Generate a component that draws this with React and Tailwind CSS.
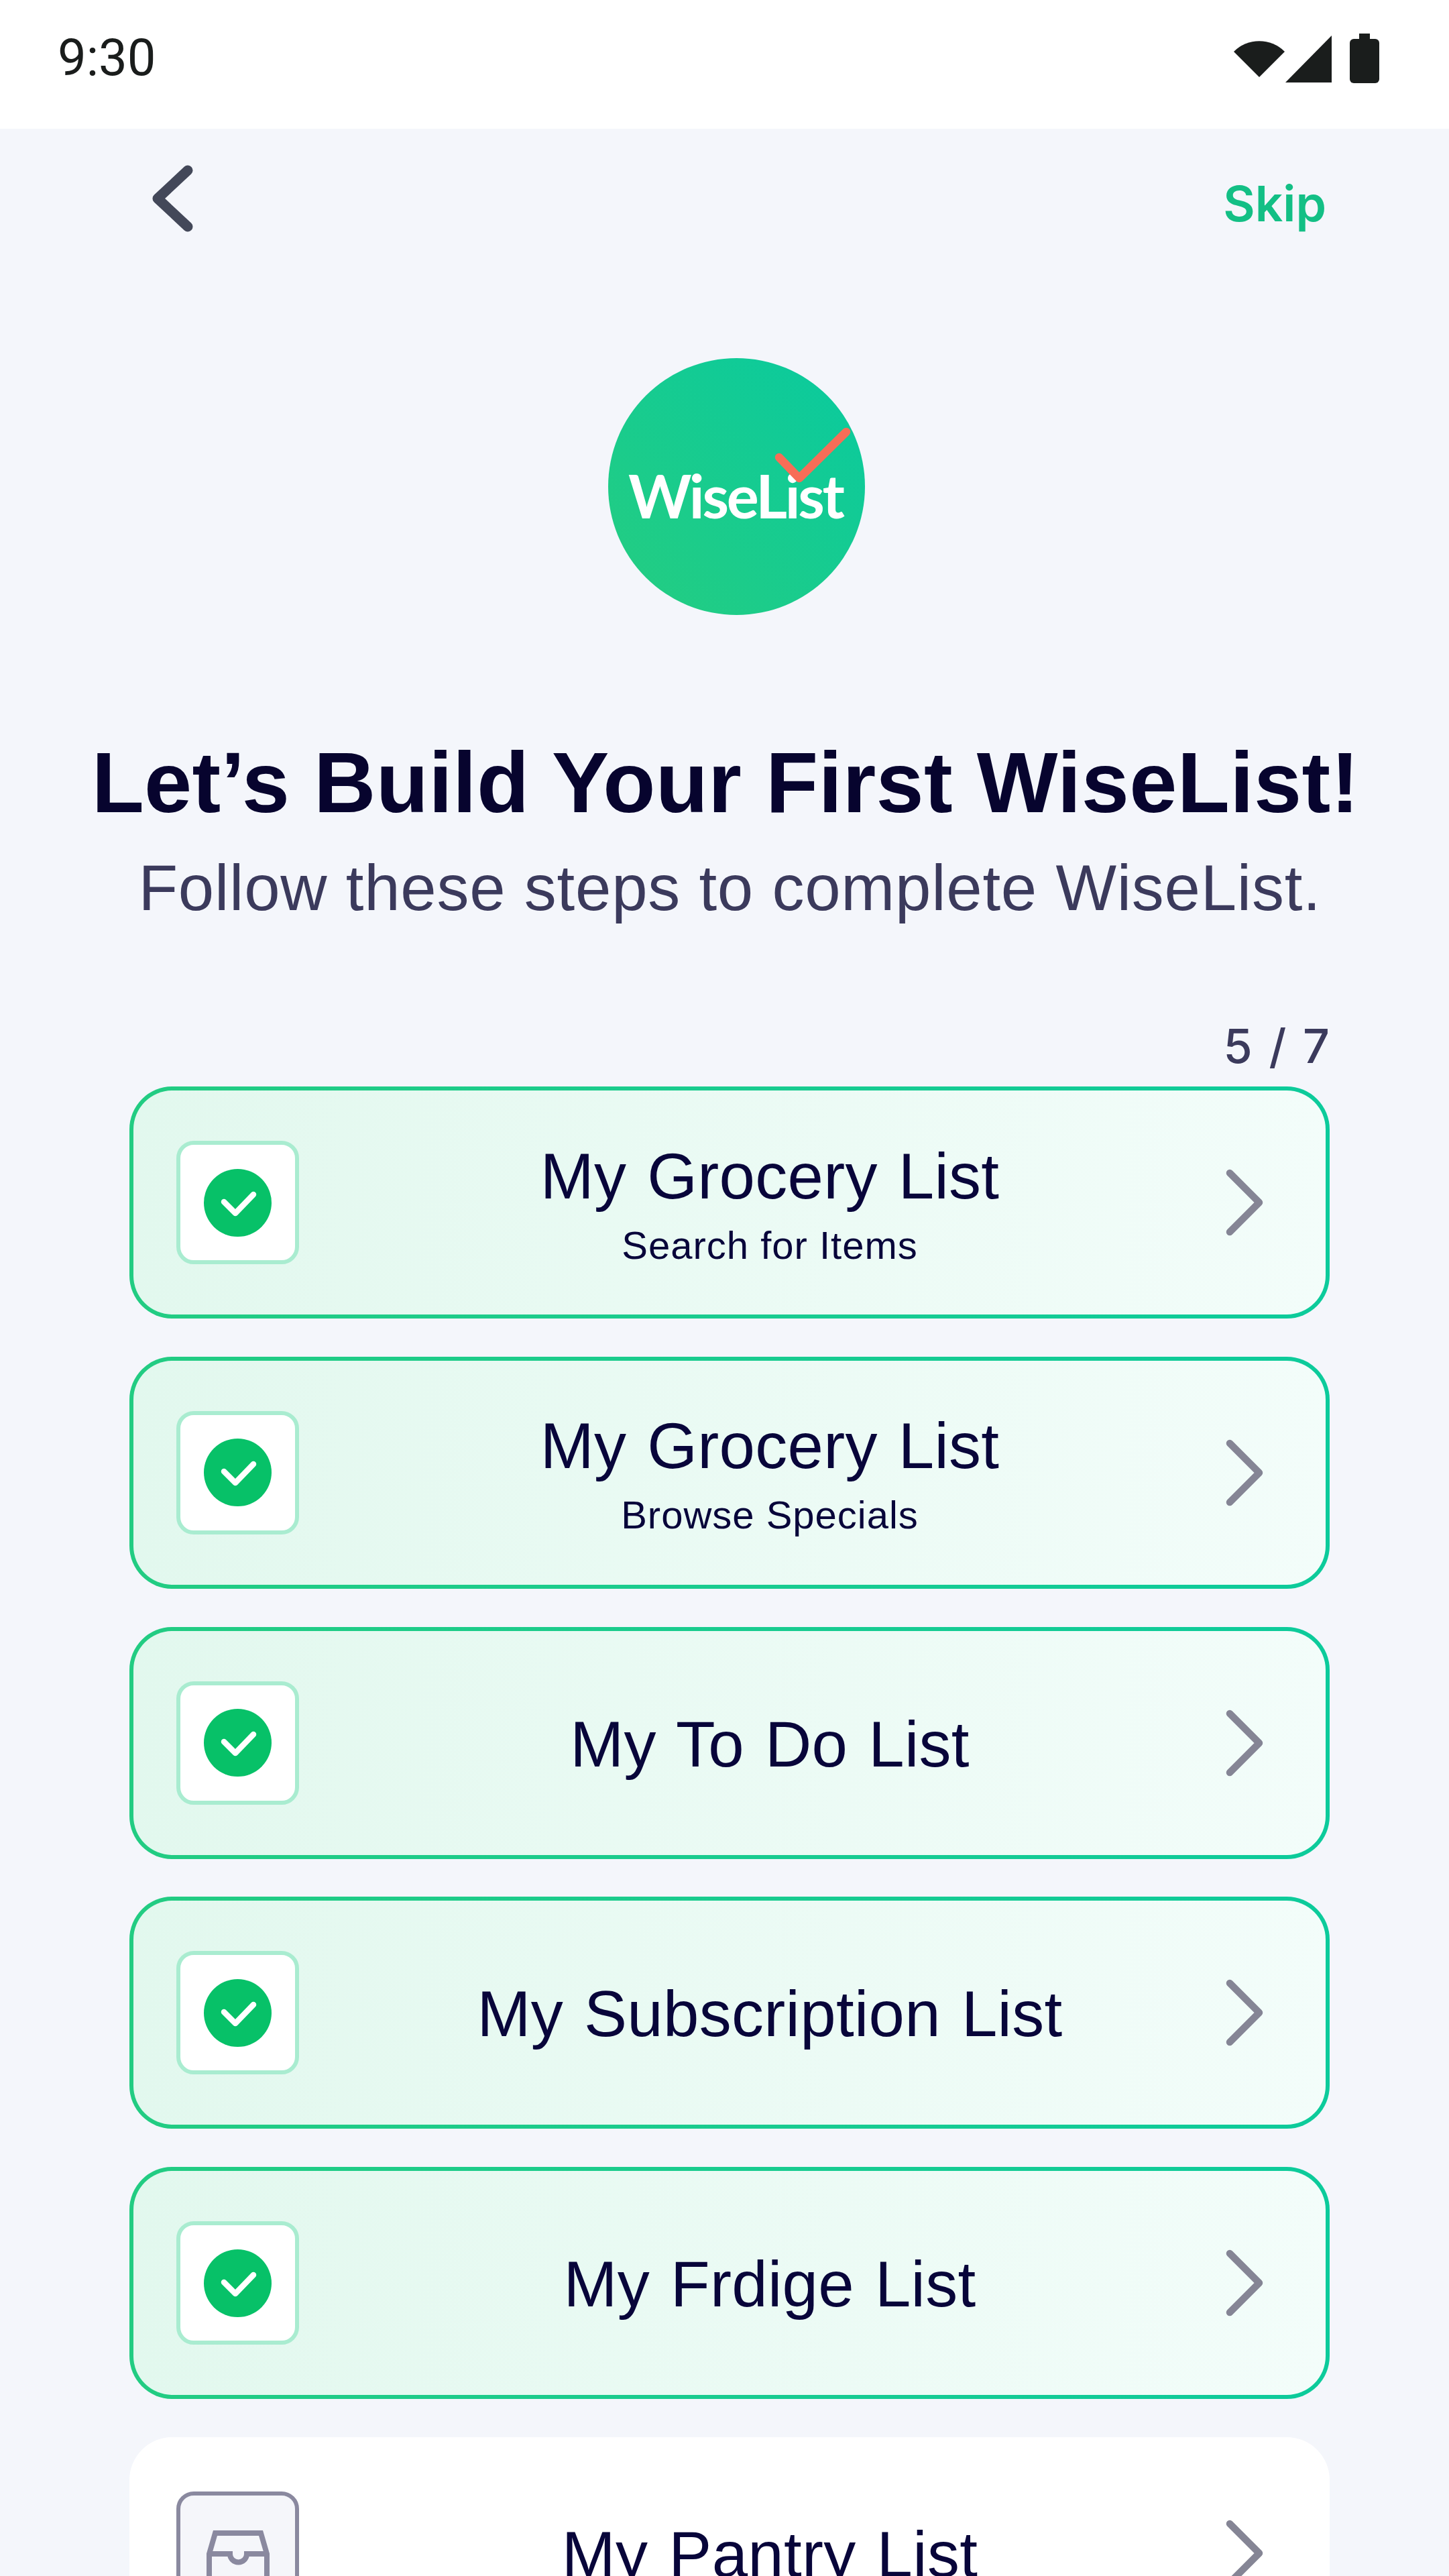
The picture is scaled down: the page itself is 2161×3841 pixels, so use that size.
import React from "react"

const sans = "font-['Liberation_Sans',Arial,sans-serif]"

const lists = [
  { title: "My Grocery List", sub: "Search for Items" },
  { title: "My Grocery List", sub: "Browse Specials" },
  { title: "My To Do List" },
  { title: "My Subscription List" },
  { title: "My Frdige List" },
]

function StatusIcons() {
  return (
    <svg width="218" height="75" viewBox="0 0 218 75" fill="#1a1d1c">
      <path d="M0 27A53.7 53.7 0 0 1 76 27L38 65Z" />
      <path d="M77 73L146 3V73Z" />
      <rect x="173" y="8" width="44" height="66" rx="6" />
      <rect x="187" y="0" width="16" height="9" />
    </svg>
  )
}

function Logo() {
  return (
    <svg width="383" height="383" viewBox="0 0 383 383">
      <defs>
        <linearGradient id="logoFill" x1="0" y1="1" x2="1" y2="0">
          <stop offset="0" stopColor="#25cd80" />
          <stop offset="1" stopColor="#09ca9f" />
        </linearGradient>
      </defs>
      <circle cx="191.5" cy="191.5" r="191.5" fill="url(#logoFill)" />
      <text
        x="30"
        y="239"
        fill="#fff"
        fontFamily="Lato, sans-serif"
        fontSize="90"
        fontWeight="700"
        textLength="323"
        lengthAdjust="spacing"
      >
        WiseList
      </text>
      <path
        d="M255 148L285 179L355 110"
        fill="none"
        stroke="#f76d57"
        strokeWidth="12.5"
        strokeLinecap="round"
        strokeLinejoin="round"
      />
    </svg>
  )
}

function Chevron() {
  return (
    <svg width="60" height="108" viewBox="0 0 60 108" fill="none" className="shrink-0">
      <path
        d="M8 10L52 54L8 98"
        stroke="#858595"
        strokeWidth="10.5"
        strokeLinecap="round"
        strokeLinejoin="round"
      />
    </svg>
  )
}

function RowLabel({ title, sub }) {
  return (
    <div className="flex-1 pl-[24px] pt-[4px] text-center text-[#08053a]">
      <div className="text-[96px] leading-[104px] tracking-[0.3px] [word-spacing:4px]">{title}</div>
      {sub && <div className="mt-[19px] text-[58px] leading-[64px] tracking-[1px]">{sub}</div>}
    </div>
  )
}

function DoneCard({ title, sub }) {
  return (
    <div className="h-[346px] rounded-[64px] bg-gradient-to-r from-[#22cc82] to-[#0ccb9b] p-[6px]">
      <div className="flex h-full items-center rounded-[58px] bg-gradient-to-r from-[#e2f8ee] to-[#f3fdfa] pl-[64px] pr-[91px]">
        <div className="flex h-[184px] w-[183px] shrink-0 items-center justify-center rounded-[26px] border-[6px] border-[#a9ecd0] bg-white">
          <svg width="101" height="101" viewBox="0 0 101 101">
            <circle cx="50.5" cy="50.5" r="50.5" fill="#07c168" />
            <path
              d="M30 49L47 66L74 38"
              fill="none"
              stroke="#fff"
              strokeWidth="8.5"
              strokeLinecap="round"
              strokeLinejoin="round"
            />
          </svg>
        </div>
        <RowLabel title={title} sub={sub} />
        <Chevron />
      </div>
    </div>
  )
}

function TodoCard({ title }) {
  return (
    <div className="flex h-[346px] items-center rounded-[64px] bg-white pl-[70px] pr-[97px]">
      <div className="flex h-[184px] w-[183px] shrink-0 justify-center overflow-hidden rounded-[26px] border-[6px] border-[#8a899f] bg-[#f5f6fa] pt-[45px]">
        <svg width="110" height="130" viewBox="0 0 110 130" fill="none" className="shrink-0">
          <path
            d="M12 130V42L21 11H89L98 42V130M12 42H43A12.5 12.5 0 0 0 68 42H98"
            stroke="#8a899f"
            strokeWidth="8"
          />
        </svg>
      </div>
      <RowLabel title={title} />
      <Chevron />
    </div>
  )
}

export default function App() {
  return (
    <div className={`h-[3841px] overflow-hidden bg-[#f4f6fb] ${sans}`}>
      {/* Status bar */}
      <div className="flex h-[192px] items-start justify-between bg-white pl-[86px] pr-[103px]">
        <span className="mt-[44px] font-['Roboto',sans-serif] text-[76px] leading-[84px] text-[#1a1d1c]">9:30</span>
        <div className="mt-[50px]">
          <StatusIcons />
        </div>
      </div>

      {/* Top actions */}
      <div className="flex items-start justify-between pl-[220px] pr-[183px] pt-[50px]">
        <svg width="70" height="112" viewBox="0 0 70 112" fill="none">
          <path
            d="M60 12L15 54L60 96"
            stroke="#434859"
            strokeWidth="15"
            strokeLinecap="round"
            strokeLinejoin="round"
          />
        </svg>
        <span className="mt-[18px] font-['Inter',sans-serif] text-[73px] font-semibold leading-[88px] text-[#13bf85]">Skip</span>
      </div>

      {/* Logo and heading */}
      <div className="mt-[180px] flex justify-center pl-[36px]">
        <Logo />
      </div>
      <h1 className="mt-[178px] pl-[3px] text-center text-[128px] font-bold leading-[144px] tracking-[0.3px] text-[#07042e]">
        Let’s Build Your First WiseList!
      </h1>
      <p className="mt-[33px] pl-[16px] text-center text-[96px] leading-[104px] tracking-[0.75px] text-[#3b3a5c]">
        Follow these steps to complete WiseList.
      </p>

      {/* Checklist */}
      <div className="mt-[145px] px-[178px]">
        <div className="mr-[-3px] text-right font-['Inter',sans-serif] text-[70px] font-medium leading-[78px] tracking-[3px] text-[#3b3a5c]">5 / 7</div>
        <div className="mt-[21px] flex flex-col gap-[56.8px] pl-[15px]">
          {lists.map((item, i) => (
            <DoneCard key={i} title={item.title} sub={item.sub} />
          ))}
          <TodoCard title="My Pantry List" />
        </div>
      </div>
    </div>
  )
}
